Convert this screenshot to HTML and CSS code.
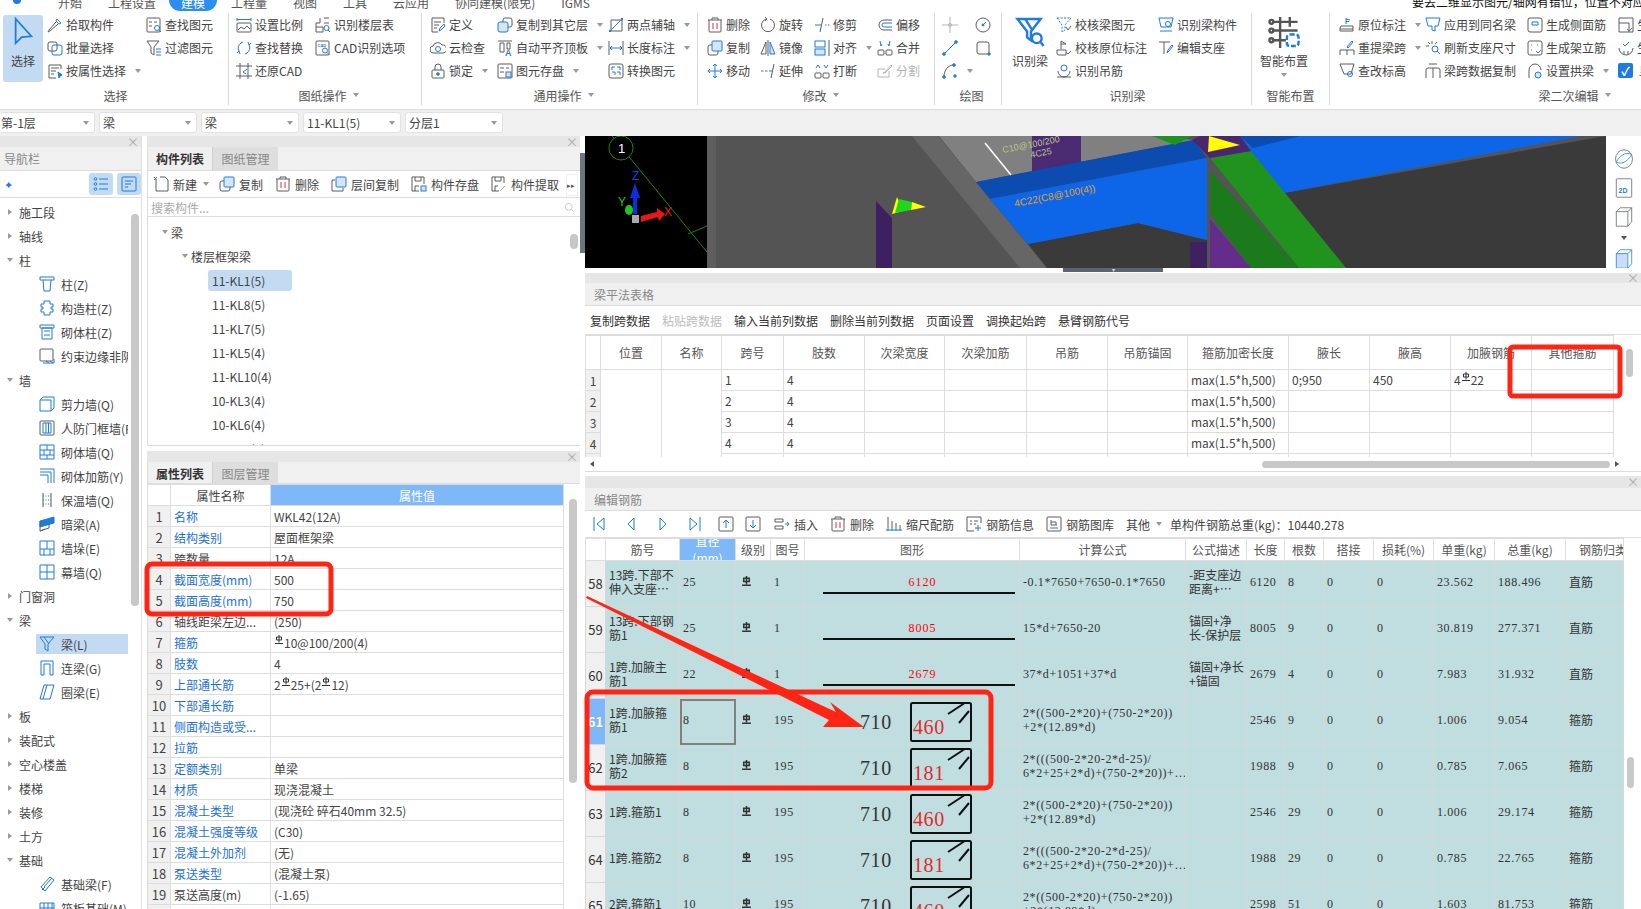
FILE: index.html
```html
<!DOCTYPE html>
<html lang="zh-CN">
<head>
    <meta charset="UTF-8">
    <title>建模</title>
    <link rel="stylesheet" href="styles.css">
</head>
<body>
    <svg class="sprite">
        <symbol id="i-pick" viewBox="0 0 16 16"><path class="b" d="M10 2l4 4-2 1-3-3z"/><path d="M9 5l-7 8-1 2 2-1 8-7"/></symbol>
        <symbol id="i-batch" viewBox="0 0 16 16"><rect x="1" y="2" width="9" height="9" rx="2"/><rect class="b" x="5" y="5" width="10" height="10" rx="2"/></symbol>
        <symbol id="i-attr" viewBox="0 0 16 16"><path d="M14 6V2H2v13h7M4 5h8M4 8h5M4 11h3"/><path class="bf" d="M11 9l4 3-2 1-1 2z"/></symbol>
        <symbol id="i-find" viewBox="0 0 16 16"><rect x="1" y="1" width="13" height="14" rx="1"/><path d="M3 5h3M8 5h3M3 9h3"/><circle class="b" cx="11" cy="11" r="2.500"/><path class="b" d="M13 13l2 2"/></symbol>
        <symbol id="i-filter" viewBox="0 0 16 16"><path d="M1 1h12L8 7v8L5 13V7z"/><path class="b" d="M10 9h5M10 12h5M10 15h5"/></symbol>
        <symbol id="i-scale" viewBox="0 0 16 16"><path class="b" d="M1 1v3M15 1v3M1 2.500h14"/><rect x="1" y="6" width="14" height="9" rx="1"/><path d="M2 13l3-3 3 2 3-3 3 3"/></symbol>
        <symbol id="i-floor" viewBox="0 0 16 16"><path d="M1 6h4V1M1 6v9h7v-5H1M9 1h5M9 6h5"/><circle class="b" cx="11.500" cy="11" r="2.500"/><path class="b" d="M13 13l2 2"/></symbol>
        <symbol id="i-swap" viewBox="0 0 16 16"><path class="b" d="M3 11a6 6 0 0 1 2-8l2-1M13 5a6 6 0 0 1-2 8l-2 1"/><path class="b" d="M4 14l-1-3-2 2M12 2l1 3 2-2"/></symbol>
        <symbol id="i-cad" viewBox="0 0 16 16"><rect x="1" y="1" width="13" height="14" rx="1"/><text class="ic-txt" x="2.500" y="6.500">CAD</text><circle class="b" cx="10" cy="10.500" r="2.500"/><path class="b" d="M12 12.500l2.500 2.500"/></symbol>
        <symbol id="i-crop" viewBox="0 0 16 16"><path d="M4 0v16M12 0v16M0 3h16M0 13h16"/><path class="b" d="M11 6L7 9l3 2"/></symbol>
        <symbol id="i-def" viewBox="0 0 16 16"><path d="M14 6V1H2v14h6M4 5h7M4 8h5M4 11h3"/><path class="b" d="M9 14l1-3 4-4 1 2-4 4z"/></symbol>
        <symbol id="i-cloud" viewBox="0 0 16 16"><path d="M4 13a3.500 3.500 0 0 1-1-7 5 5 0 0 1 9-1 4 4 0 0 1 1 8z"/><circle class="b" cx="8" cy="9" r="2.500"/></symbol>
        <symbol id="i-lock" viewBox="0 0 16 16"><path d="M5 7V4a3 3 0 0 1 6 0v3"/><rect x="2" y="7" width="12" height="8" rx="1"/><circle class="bf" cx="8" cy="11" r="1.300"/></symbol>
        <symbol id="i-copyf" viewBox="0 0 16 16"><rect x="6" y="1" width="9" height="9" rx="2"/><rect class="bl" x="1" y="5" width="10" height="10" rx="2"/></symbol>
        <symbol id="i-align" viewBox="0 0 16 16"><path d="M1 1h14M3 3h4v9H3zM10 3h3v6h-3z"/><text class="ic-blue" x="8" y="15.500">A</text></symbol>
        <symbol id="i-save" viewBox="0 0 16 16"><rect x="1" y="1" width="14" height="14" rx="1"/><path d="M3 5h4M9 5h3M3 9h4"/><rect class="bl" x="9" y="9" width="5" height="5"/></symbol>
        <symbol id="i-axis" viewBox="0 0 16 16"><path d="M3 3h11v11H3z"/><path class="b" d="M1 15L15 1M1 13l2 2M13 1l2 2"/></symbol>
        <symbol id="i-dim" viewBox="0 0 16 16"><path d="M1 1v14M15 1v14"/><path class="b" d="M2 8h12M4 6L2 8l2 2M12 6l2 2-2 2"/></symbol>
        <symbol id="i-conv" viewBox="0 0 16 16"><rect x="1" y="1" width="14" height="14" rx="2"/><path class="b" d="M4 7V4h3M9 4h3v3M4 9h3v3M9 9h3v3"/></symbol>
        <symbol id="i-del" viewBox="0 0 16 16"><path d="M1 3h14M5 3V1h6v2M2 3v11a1 1 0 0 0 1 1h10a1 1 0 0 0 1-1V3"/><path class="r" d="M6 6v6M10 6v6"/></symbol>
        <symbol id="i-rot" viewBox="0 0 16 16"><path d="M6 2a6.500 6.500 0 1 0 4 0"/><path class="b" d="M5 0l2 2-2 2"/></symbol>
        <symbol id="i-trim" viewBox="0 0 16 16"><path d="M6 15L9 1"/><path class="b" d="M1 8h6M11 8h1.500M14 8h1.500"/></symbol>
        <symbol id="i-offset" viewBox="0 0 16 16"><path d="M15 3H7a5 5 0 0 0 0 10h8"/><path class="b" d="M15 6H7a2 2 0 0 0 0 4h8"/></symbol>
        <symbol id="i-copy" viewBox="0 0 16 16"><rect x="1" y="5" width="10" height="10" rx="2"/><rect class="bl" x="5" y="1" width="10" height="10" rx="1"/></symbol>
        <symbol id="i-mirror" viewBox="0 0 16 16"><path d="M6 2L1 14h5z"/><path class="bl" d="M10 2l5 12h-5z"/><path d="M8 0v16"/></symbol>
        <symbol id="i-alignb" viewBox="0 0 16 16"><rect class="b" x="1" y="1" width="10" height="6"/><rect class="bl" x="1" y="9" width="10" height="6"/><path d="M15 0v16"/></symbol>
        <symbol id="i-merge" viewBox="0 0 16 16"><rect x="1" y="10" width="6" height="5" rx="1"/><rect x="9" y="10" width="6" height="5" rx="1"/><path class="b" d="M3 1l1 5 1-2M13 1l-1 5-1-2"/></symbol>
        <symbol id="i-move" viewBox="0 0 16 16"><path class="b" d="M8 1v14M1 8h14M6 3l2-2 2 2M6 13l2 2 2-2M3 6L1 8l2 2M13 6l2 2-2 2"/></symbol>
        <symbol id="i-ext" viewBox="0 0 16 16"><path d="M11 15L14 1"/><path class="b" d="M1 8h2.500M5 8h2.500M9 8h3"/></symbol>
        <symbol id="i-break" viewBox="0 0 16 16"><rect x="1" y="10" width="6" height="5" rx="1"/><rect x="9" y="10" width="6" height="5" rx="1"/><path class="b" d="M2 5l2-3 2 3M10 2l2 3 2-3"/></symbol>
        <symbol id="i-split" viewBox="0 0 16 16"><path class="g" d="M12 8v6H1V6h7M6 10l1 0 7-8 1 1-7 7z"/></symbol>
        <symbol id="i-point" viewBox="0 0 16 16"><path class="g" d="M8 0v16M0 8h16"/><circle class="g" cx="8" cy="8" r="1.500"/></symbol>
        <symbol id="i-circle" viewBox="0 0 16 16"><circle cx="8" cy="8" r="7"/><path class="b" d="M8 8l3-3"/><circle class="bf" cx="8" cy="8" r="1"/></symbol>
        <symbol id="i-line" viewBox="0 0 16 16"><path class="b" d="M2 14L14 2"/><circle class="bf" cx="2" cy="14" r="1.300"/><circle class="bf" cx="14" cy="2" r="1.300"/></symbol>
        <symbol id="i-rect" viewBox="0 0 16 16"><rect x="2" y="2" width="12" height="12" rx="2"/><circle class="bf" cx="14" cy="14" r="1.200"/></symbol>
        <symbol id="i-arc" viewBox="0 0 16 16"><path d="M2 14C2 7 6 2 12 2"/><circle class="bf" cx="2" cy="14" r="1.300"/><circle class="bf" cx="12" cy="2" r="1.300"/><circle class="bf" cx="13" cy="13" r="1.200"/></symbol>
        <symbol id="i-chk" viewBox="0 0 16 16"><path class="b" stroke-dasharray="2 1.500" d="M1 1h14l-6 7v5l-3 2V8z"/><path d="M10 10l2 3 3-4"/></symbol>
        <symbol id="i-chk2" viewBox="0 0 16 16"><path d="M5 9V1l5 3H5M1 10h9v5H3a2 2 0 0 1-2-2z"/><path class="b" d="M10 12l2 2 3-3"/></symbol>
        <symbol id="i-hang" viewBox="0 0 16 16"><path d="M2 8a6 6 0 0 0 12 0M1 14h14"/><circle class="b" cx="8" cy="5" r="3"/></symbol>
        <symbol id="i-beamc" viewBox="0 0 16 16"><path class="b" d="M1 1h14l-2 9H3zM2 14h12"/><circle class="b" cx="10" cy="7" r="2.500"/></symbol>
        <symbol id="i-sup" viewBox="0 0 16 16"><path d="M1 2h11M6 2v12"/><path class="b" d="M9 13l1-3 4-5 1 1-4 5z"/></symbol>
        <symbol id="i-pos" viewBox="0 0 16 16"><path class="b" d="M7 1v6M7 2l4 1M7 4.500h3"/><path d="M2 9h12v5H1v-3zM1 12h13"/></symbol>
        <symbol id="i-span" viewBox="0 0 16 16"><path class="b" d="M8 7l5-6 1 1-5 6z"/><path d="M1 15v-5h14v5M8 10v5"/></symbol>
        <symbol id="i-elev" viewBox="0 0 16 16"><path d="M1 1h14l-3 10H5z"/><circle class="b" cx="11" cy="11" r="2.500"/></symbol>
        <symbol id="i-same" viewBox="0 0 16 16"><path class="b" d="M1 1h14l-2 8h-3v5l-3-1V9H3z"/></symbol>
        <symbol id="i-refresh" viewBox="0 0 16 16"><path d="M7 1v3M1 6h3M3 2l2 2M12 2l-2 2"/><circle class="b" cx="10" cy="9" r="3"/><path class="b" d="M12 11l3 3"/></symbol>
        <symbol id="i-spancopy" viewBox="0 0 16 16"><path d="M1 15V7a2 2 0 0 1 2-2h10a2 2 0 0 1 2 2v8M8 5v10M4 1h8"/></symbol>
        <symbol id="i-side" viewBox="0 0 16 16"><rect x="1" y="1" width="14" height="14" rx="2"/><path class="b" d="M5 5h6M5 8h6M5 5v3M11 5v3"/></symbol>
        <symbol id="i-erect" viewBox="0 0 16 16"><rect x="1" y="1" width="14" height="14" rx="2"/><path class="b" d="M4 5h1M10 5h1M4 10h1M9 11l2 2 3-3"/></symbol>
        <symbol id="i-arch" viewBox="0 0 16 16"><path d="M2 15V7a6 6 0 0 1 12 0"/><circle class="bl" cx="11" cy="12" r="3"/></symbol>
        <symbol id="i-gen" viewBox="0 0 16 16"><path d="M1 1h14v14H1zM1 6h10v9"/><path class="b" d="M9 12l2 2 3-3"/></symbol>
        <symbol id="i-gen2" viewBox="0 0 16 16"><path d="M1 8a7 7 0 0 0 14 0M6 14v-3M10 14v-3"/><path class="b" d="M5 4l2 2 4-4"/></symbol>
        <symbol id="i-list" viewBox="0 0 16 16"><path class="b" d="M6 3h9M6 8h9M6 13h9"/><circle class="b" cx="2.500" cy="3" r="1.300"/><circle class="b" cx="2.500" cy="8" r="1.300"/><circle class="b" cx="2.500" cy="13" r="1.300"/></symbol>
        <symbol id="i-form" viewBox="0 0 16 16"><rect class="b" x="1" y="1" width="14" height="14" rx="1"/><path class="b" d="M4 5h8M4 8h6M4 11h3"/></symbol>
        <symbol id="i-col" viewBox="0 0 16 16"><path class="b" d="M1 1h14v3H1zM4 4l1 11h6l1-11"/></symbol>
        <symbol id="i-col2" viewBox="0 0 16 16"><path class="b" d="M5 1h6v3h3v3h-2v2h2v3h-3v3H5v-3H2V9h2V7H2V4h3z"/></symbol>
        <symbol id="i-col3" viewBox="0 0 16 16"><path class="b" d="M1 1h14v3H1zM3 4h10v11H3zM5 7h6M5 11h6"/></symbol>
        <symbol id="i-edge" viewBox="0 0 16 16"><rect x="1" y="1" width="13" height="12" rx="1"/><path class="b" d="M4 15h11v-4M7 13l3 2M11 13l3 2"/></symbol>
        <symbol id="i-wall" viewBox="0 0 16 16"><path class="b" d="M1 4h11v11H1zM1 4l3-3h11v11l-3 3"/></symbol>
        <symbol id="i-door" viewBox="0 0 16 16"><rect x="1" y="1" width="14" height="14" rx="1"/><path class="b" d="M4 3h8v10H4zM7 3v10M9.500 3v10"/></symbol>
        <symbol id="i-brick" viewBox="0 0 16 16"><path class="b" d="M1 1h14v14H1zM1 6h14M1 11h14M8 1v5M5 6v5M11 6v5M8 11v4"/></symbol>
        <symbol id="i-rebar" viewBox="0 0 16 16"><path class="b" d="M1 1h14v14M1 4h11v11M1 7h8v8"/></symbol>
        <symbol id="i-ins" viewBox="0 0 16 16"><path d="M4 1v14M12 1v14"/><path class="b" d="M4 4h8M4 8h8M4 12h8" stroke-dasharray="1 1.500"/></symbol>
        <symbol id="i-dark" viewBox="0 0 16 16"><path class="bf" d="M1 5l14-4v6L1 11z"/><path d="M1 5v10l9-3V8M1 15l5-2"/></symbol>
        <symbol id="i-pier" viewBox="0 0 16 16"><path class="b" d="M1 1h14v14H1zM8 1v8M1 9h14M5 9v6M11 9v6"/></symbol>
        <symbol id="i-cur" viewBox="0 0 16 16"><path class="b" d="M1 1h14v14H1zM8 1v14M1 8h14"/></symbol>
        <symbol id="i-beam" viewBox="0 0 16 16"><path class="b" d="M1 1h14l-6 7v7l-3-2V8zM5 1l5 7"/></symbol>
        <symbol id="i-lian" viewBox="0 0 16 16"><path class="b" d="M2 15V1h12v14h-3V4H5v11z"/></symbol>
        <symbol id="i-ring" viewBox="0 0 16 16"><path class="b" d="M5 1h10l-4 14H1zM8 1L4 15"/></symbol>
        <symbol id="i-found" viewBox="0 0 16 16"><path class="b" d="M2 11L11 1l4 3-9 11zM5 11l8-9M3 14l3-3"/></symbol>
        <symbol id="i-raft" viewBox="0 0 16 16"><path class="b" d="M1 3h14v12H1zM5 3v12M9 3v12M13 3v12M1 8h14"/></symbol>
        <symbol id="i-new" viewBox="0 0 16 16"><path d="M3 3v12h12V4l-3-3H7"/><path class="b" d="M1 1l3 3M4 1L1 4"/></symbol>
        <symbol id="i-lcopy" viewBox="0 0 16 16"><path d="M4 4H1v11h11v-3"/><rect class="bl" x="5" y="1" width="10" height="10" rx="1"/></symbol>
        <symbol id="i-fsave" viewBox="0 0 16 16"><path d="M8 15H1V1h12v7M4 1v4h6V1M4 15v-5h4"/><rect class="bl" x="10" y="10" width="5" height="5"/></symbol>
        <symbol id="i-fget" viewBox="0 0 16 16"><path d="M8 15H1V1h12v6M4 1v4h6V1M4 15v-5h3"/><path class="g" d="M9 15l5-5"/></symbol>
        <symbol id="i-mag" viewBox="0 0 16 16"><circle class="g" cx="7" cy="7" r="5"/><path class="g" d="M11 11l4 4"/></symbol>
        <symbol id="i-first" viewBox="0 0 16 16"><path class="b" d="M3 1v14M13 2L6 8l7 6z"/></symbol>
        <symbol id="i-prev" viewBox="0 0 16 16"><path class="b" d="M11 2L5 8l6 6z"/></symbol>
        <symbol id="i-next" viewBox="0 0 16 16"><path class="b" d="M5 2l6 6-6 6z"/></symbol>
        <symbol id="i-last" viewBox="0 0 16 16"><path class="b" d="M13 1v14M3 2l7 6-7 6z"/></symbol>
        <symbol id="i-up" viewBox="0 0 16 16"><rect x="1" y="1" width="14" height="14" rx="1"/><path class="b" d="M8 12V4M5 7l3-3 3 3"/></symbol>
        <symbol id="i-down" viewBox="0 0 16 16"><rect x="1" y="1" width="14" height="14" rx="1"/><path class="b" d="M8 4v8M5 9l3 3 3-3"/></symbol>
        <symbol id="i-insert" viewBox="0 0 16 16"><path d="M1 3h8v3H1zM1 10h8v3H1z"/><path class="b" d="M11 8h4M13 6l2 2-2 2"/></symbol>
        <symbol id="i-ruler" viewBox="0 0 16 16"><path d="M2 1v11M6 5v7M10 7v5M14 9v3"/><path class="b" d="M0 14h16M2 12v3M6 12v3M10 12v3M14 12v3"/></symbol>
        <symbol id="i-info" viewBox="0 0 16 16"><path d="M15 7V1H1v14h7M4 5h2M8 5h4M4 8h2M8 8h2"/><path class="b" d="M9 12h6M12 9v6"/></symbol>
        <symbol id="i-lib" viewBox="0 0 16 16"><rect x="1" y="1" width="14" height="14" rx="1"/><path d="M5 4v5h6M5 6h5v3"/><path class="b" d="M4 12h8"/></symbol>
        <symbol id="i-rb" viewBox="0 0 8 10"><path d="M1.500 2h5v3h-5zM4 0v7.500M0 8.500h8"/></symbol>
        <symbol id="i-stirrup" viewBox="0 0 62 40"><rect class="st-box" x="1" y="1" width="60" height="38" rx="1.500"/><path class="st-box" d="M38 12L54 1.500M49 21l10-12"/></symbol>
    </svg>

    <div class="tab-strip">
        <span class="logo-dot"></span>
        <span class="tab">开始</span>
        <span class="tab">工程设置</span>
        <span class="tab active">建模</span>
        <span class="tab">工程量</span>
        <span class="tab">视图</span>
        <span class="tab">工具</span>
        <span class="tab">云应用</span>
        <span class="tab">协同建模(限免)</span>
        <span class="tab">IGMS</span>
        <span class="top-note">要丢二维显示图元/轴网有错位，位置不对应</span>
    </div>

    <div class="ribbon">
        <div class="rb-group g-select">
            <div class="rb-body">
                <div class="rb-big selected">
                    <svg class="ic big-arrow" viewBox="0 0 24 32"><path d="M3 2v28l7-7 11-1z"/></svg>
                    <span>选择</span>
                </div>
                <div class="rb-col w99">
                    <div class="rb-item"><svg class="ic"><use href="#i-pick"/></svg><span>拾取构件</span></div>
                    <div class="rb-item"><svg class="ic"><use href="#i-batch"/></svg><span>批量选择</span></div>
                    <div class="rb-item"><svg class="ic"><use href="#i-attr"/></svg><span>按属性选择</span><i class="caret"></i></div>
                </div>
                <div class="rb-col">
                    <div class="rb-item"><svg class="ic"><use href="#i-find"/></svg><span>查找图元</span></div>
                    <div class="rb-item"><svg class="ic"><use href="#i-filter"/></svg><span>过滤图元</span></div>
                </div>
            </div>
            <div class="rb-label">选择</div>
        </div>

        <div class="rb-group g-cad">
            <div class="rb-body">
                <div class="rb-col w79">
                    <div class="rb-item"><svg class="ic"><use href="#i-scale"/></svg><span>设置比例</span></div>
                    <div class="rb-item"><svg class="ic"><use href="#i-swap"/></svg><span>查找替换</span></div>
                    <div class="rb-item"><svg class="ic"><use href="#i-crop"/></svg><span>还原CAD</span></div>
                </div>
                <div class="rb-col">
                    <div class="rb-item"><svg class="ic"><use href="#i-floor"/></svg><span>识别楼层表</span></div>
                    <div class="rb-item"><svg class="ic"><use href="#i-cad"/></svg><span>CAD识别选项</span></div>
                </div>
            </div>
            <div class="rb-label">图纸操作<i class="caret"></i></div>
        </div>

        <div class="rb-group g-common">
            <div class="rb-body">
                <div class="rb-col w67">
                    <div class="rb-item"><svg class="ic"><use href="#i-def"/></svg><span>定义</span></div>
                    <div class="rb-item"><svg class="ic"><use href="#i-cloud"/></svg><span>云检查</span></div>
                    <div class="rb-item"><svg class="ic"><use href="#i-lock"/></svg><span>锁定</span><i class="caret"></i></div>
                </div>
                <div class="rb-col w111">
                    <div class="rb-item"><svg class="ic"><use href="#i-copyf"/></svg><span>复制到其它层</span><i class="caret"></i></div>
                    <div class="rb-item"><svg class="ic"><use href="#i-align"/></svg><span>自动平齐顶板</span><i class="caret"></i></div>
                    <div class="rb-item"><svg class="ic"><use href="#i-save"/></svg><span>图元存盘</span><i class="caret"></i></div>
                </div>
                <div class="rb-col">
                    <div class="rb-item"><svg class="ic"><use href="#i-axis"/></svg><span>两点辅轴</span><i class="caret"></i></div>
                    <div class="rb-item"><svg class="ic"><use href="#i-dim"/></svg><span>长度标注</span><i class="caret"></i></div>
                    <div class="rb-item"><svg class="ic"><use href="#i-conv"/></svg><span>转换图元</span></div>
                </div>
            </div>
            <div class="rb-label">通用操作<i class="caret"></i></div>
        </div>

        <div class="rb-group g-edit">
            <div class="rb-body">
                <div class="rb-col w53">
                    <div class="rb-item"><svg class="ic"><use href="#i-del"/></svg><span>删除</span></div>
                    <div class="rb-item"><svg class="ic"><use href="#i-copy"/></svg><span>复制</span></div>
                    <div class="rb-item"><svg class="ic"><use href="#i-move"/></svg><span>移动</span></div>
                </div>
                <div class="rb-col w54">
                    <div class="rb-item"><svg class="ic"><use href="#i-rot"/></svg><span>旋转</span></div>
                    <div class="rb-item"><svg class="ic"><use href="#i-mirror"/></svg><span>镜像</span></div>
                    <div class="rb-item"><svg class="ic"><use href="#i-ext"/></svg><span>延伸</span></div>
                </div>
                <div class="rb-col w63">
                    <div class="rb-item"><svg class="ic"><use href="#i-trim"/></svg><span>修剪</span></div>
                    <div class="rb-item"><svg class="ic"><use href="#i-alignb"/></svg><span>对齐</span><i class="caret"></i></div>
                    <div class="rb-item"><svg class="ic"><use href="#i-break"/></svg><span>打断</span></div>
                </div>
                <div class="rb-col">
                    <div class="rb-item"><svg class="ic"><use href="#i-offset"/></svg><span>偏移</span></div>
                    <div class="rb-item"><svg class="ic"><use href="#i-merge"/></svg><span>合并</span></div>
                    <div class="rb-item disabled"><svg class="ic"><use href="#i-split"/></svg><span>分割</span></div>
                </div>
            </div>
            <div class="rb-label">修改<i class="caret"></i></div>
        </div>

        <div class="rb-group g-draw">
            <div class="rb-body">
                <div class="rb-col w33">
                    <div class="rb-item"><svg class="ic"><use href="#i-point"/></svg></div>
                    <div class="rb-item"><svg class="ic"><use href="#i-line"/></svg></div>
                    <div class="rb-item"><svg class="ic"><use href="#i-arc"/></svg><i class="caret"></i></div>
                </div>
                <div class="rb-col">
                    <div class="rb-item"><svg class="ic"><use href="#i-circle"/></svg></div>
                    <div class="rb-item"><svg class="ic"><use href="#i-rect"/></svg></div>
                </div>
            </div>
            <div class="rb-label">绘图</div>
        </div>

        <div class="rb-group g-beam">
            <div class="rb-body">
                <div class="rb-big w52">
                    <svg class="big-filter" viewBox="0 0 30 32"><path d="M2 2h24L16 15v9l-4-3v-6zM10 2l7 11"/><circle cx="22" cy="22" r="5"/><path d="M26 26l3 4"/></svg>
                    <span>识别梁</span>
                </div>
                <div class="rb-col w102">
                    <div class="rb-item"><svg class="ic"><use href="#i-chk"/></svg><span>校核梁图元</span></div>
                    <div class="rb-item"><svg class="ic"><use href="#i-chk2"/></svg><span>校核原位标注</span></div>
                    <div class="rb-item"><svg class="ic"><use href="#i-hang"/></svg><span>识别吊筋</span></div>
                </div>
                <div class="rb-col">
                    <div class="rb-item"><svg class="ic"><use href="#i-beamc"/></svg><span>识别梁构件</span></div>
                    <div class="rb-item"><svg class="ic"><use href="#i-sup"/></svg><span>编辑支座</span></div>
                </div>
            </div>
            <div class="rb-label">识别梁</div>
        </div>

        <div class="rb-group g-smart">
            <div class="rb-body">
                <div class="rb-big w62">
                    <svg class="big-smart" viewBox="0 0 32 32"><path d="M4 5h26M4 14h26M4 24h14M12 0v32M22 0v10"/><circle cx="3" cy="5" r="2"/><circle cx="3" cy="14" r="2"/><circle cx="3" cy="24" r="2"/><rect class="smart-sel" x="19" y="18" width="12" height="12" rx="3"/></svg>
                    <span>智能布置</span>
                    <i class="caret"></i>
                </div>
            </div>
            <div class="rb-label">智能布置</div>
        </div>

        <div class="rb-group g-second">
            <div class="rb-body">
                <div class="rb-col w86">
                    <div class="rb-item"><svg class="ic"><use href="#i-pos"/></svg><span>原位标注</span><i class="caret"></i></div>
                    <div class="rb-item"><svg class="ic"><use href="#i-span"/></svg><span>重提梁跨</span><i class="caret"></i></div>
                    <div class="rb-item"><svg class="ic"><use href="#i-elev"/></svg><span>查改标高</span></div>
                </div>
                <div class="rb-col w102">
                    <div class="rb-item"><svg class="ic"><use href="#i-same"/></svg><span>应用到同名梁</span></div>
                    <div class="rb-item"><svg class="ic"><use href="#i-refresh"/></svg><span>刷新支座尺寸</span></div>
                    <div class="rb-item"><svg class="ic"><use href="#i-spancopy"/></svg><span>梁跨数据复制</span></div>
                </div>
                <div class="rb-col w91">
                    <div class="rb-item"><svg class="ic"><use href="#i-side"/></svg><span>生成侧面筋</span></div>
                    <div class="rb-item"><svg class="ic"><use href="#i-erect"/></svg><span>生成架立筋</span></div>
                    <div class="rb-item"><svg class="ic"><use href="#i-arch"/></svg><span>设置拱梁</span><i class="caret"></i></div>
                </div>
                <div class="rb-col">
                    <div class="rb-item"><svg class="ic"><use href="#i-gen"/></svg><span>生成吊筋</span></div>
                    <div class="rb-item"><svg class="ic"><use href="#i-gen2"/></svg><span>生成</span></div>
                    <div class="rb-item"><span class="check">✓</span><span>显示</span></div>
                </div>
            </div>
            <div class="rb-label">梁二次编辑<i class="caret"></i></div>
        </div>
    </div>

    <div class="combo-row">
        <div class="combo first">第-1层<i class="caret"></i></div>
        <div class="combo">梁<i class="caret"></i></div>
        <div class="combo">梁<i class="caret"></i></div>
        <div class="combo">11-KL1(5)<i class="caret"></i></div>
        <div class="combo">分层1<i class="caret"></i></div>
    </div>

    <div class="main-content">
        <div class="nav-panel">
            <div class="close-bar">×</div>
            <div class="panel-head">导航栏</div>
            <div class="nav-tools">
                <span class="sparkle">✦</span>
                <span class="nav-btn"><svg class="ic"><use href="#i-list"/></svg></span>
                <span class="nav-btn"><svg class="ic"><use href="#i-form"/></svg></span>
            </div>
            <div class="nav-tree">
                <div class="node"><i class="tri-r"></i>施工段</div>
                <div class="node"><i class="tri-r"></i>轴线</div>
                <div class="node"><i class="tri-d"></i>柱</div>
                <div class="leaf"><svg class="ic"><use href="#i-col"/></svg><span>柱(Z)</span></div>
                <div class="leaf"><svg class="ic"><use href="#i-col2"/></svg><span>构造柱(Z)</span></div>
                <div class="leaf"><svg class="ic"><use href="#i-col3"/></svg><span>砌体柱(Z)</span></div>
                <div class="leaf"><svg class="ic"><use href="#i-edge"/></svg><span>约束边缘非阴影</span></div>
                <div class="node"><i class="tri-d"></i>墙</div>
                <div class="leaf"><svg class="ic"><use href="#i-wall"/></svg><span>剪力墙(Q)</span></div>
                <div class="leaf"><svg class="ic"><use href="#i-door"/></svg><span>人防门框墙(RF)</span></div>
                <div class="leaf"><svg class="ic"><use href="#i-brick"/></svg><span>砌体墙(Q)</span></div>
                <div class="leaf"><svg class="ic"><use href="#i-rebar"/></svg><span>砌体加筋(Y)</span></div>
                <div class="leaf"><svg class="ic"><use href="#i-ins"/></svg><span>保温墙(Q)</span></div>
                <div class="leaf"><svg class="ic"><use href="#i-dark"/></svg><span>暗梁(A)</span></div>
                <div class="leaf"><svg class="ic"><use href="#i-pier"/></svg><span>墙垛(E)</span></div>
                <div class="leaf"><svg class="ic"><use href="#i-cur"/></svg><span>幕墙(Q)</span></div>
                <div class="node"><i class="tri-r"></i>门窗洞</div>
                <div class="node"><i class="tri-d"></i>梁</div>
                <div class="leaf selected"><svg class="ic"><use href="#i-beam"/></svg><span>梁(L)</span></div>
                <div class="leaf"><svg class="ic"><use href="#i-lian"/></svg><span>连梁(G)</span></div>
                <div class="leaf"><svg class="ic"><use href="#i-ring"/></svg><span>圈梁(E)</span></div>
                <div class="node"><i class="tri-r"></i>板</div>
                <div class="node"><i class="tri-r"></i>装配式</div>
                <div class="node"><i class="tri-r"></i>空心楼盖</div>
                <div class="node"><i class="tri-r"></i>楼梯</div>
                <div class="node"><i class="tri-r"></i>装修</div>
                <div class="node"><i class="tri-r"></i>土方</div>
                <div class="node"><i class="tri-d"></i>基础</div>
                <div class="leaf"><svg class="ic"><use href="#i-found"/></svg><span>基础梁(F)</span></div>
                <div class="leaf"><svg class="ic"><use href="#i-raft"/></svg><span>筏板基础(M)</span></div>
            </div>
            <div class="thumb nav-thumb"></div>
        </div>

        <div class="mid-col">
            <div class="list-panel">
                <div class="close-bar">×</div>
                <div class="tab-head">
                    <span class="panel-tab on">构件列表</span>
                    <span class="panel-tab">图纸管理</span>
                </div>
                <div class="list-tools">
                    <div class="tool"><svg class="ic"><use href="#i-new"/></svg><span>新建</span><i class="caret"></i></div>
                    <div class="tool"><svg class="ic"><use href="#i-copy"/></svg><span>复制</span></div>
                    <div class="tool"><svg class="ic"><use href="#i-del"/></svg><span>删除</span></div>
                    <div class="tool"><svg class="ic"><use href="#i-lcopy"/></svg><span>层间复制</span></div>
                    <div class="tool"><svg class="ic"><use href="#i-fsave"/></svg><span>构件存盘</span></div>
                    <div class="tool"><svg class="ic"><use href="#i-fget"/></svg><span>构件提取</span></div>
                    <span class="more">▸▸</span>
                </div>
                <div class="search-row">
                    <span>搜索构件...</span>
                    <svg class="ic small"><use href="#i-mag"/></svg>
                </div>
                <div class="list-tree">
                    <div class="lv1"><i class="tri-d"></i>梁</div>
                    <div class="lv2"><i class="tri-d"></i>楼层框架梁</div>
                    <div class="lv3"><span class="pick">11-KL1(5)</span></div>
                    <div class="lv3"><span>11-KL8(5)</span></div>
                    <div class="lv3"><span>11-KL7(5)</span></div>
                    <div class="lv3"><span>11-KL5(4)</span></div>
                    <div class="lv3"><span>11-KL10(4)</span></div>
                    <div class="lv3"><span>10-KL3(4)</span></div>
                    <div class="lv3"><span>10-KL6(4)</span></div>
                    <div class="lv3"><span>10-KL4(4)</span></div>
                </div>
                <div class="thumb list-thumb"></div>
            </div>

            <div class="prop-panel">
                <div class="close-bar">×</div>
                <div class="tab-head">
                    <span class="panel-tab on">属性列表</span>
                    <span class="panel-tab">图层管理</span>
                </div>
                <table class="prop-table">
                    <colgroup><col class="c23"><col class="c100"><col></colgroup>
                    <tr><th></th><th>属性名称</th><th class="hl">属性值</th></tr>
                    <tr><td class="idx">1</td><td class="lnk">名称</td><td>WKL42(12A)</td></tr>
                    <tr><td class="idx">2</td><td class="lnk">结构类别</td><td>屋面框架梁</td></tr>
                    <tr><td class="idx">3</td><td>跨数量</td><td>12A</td></tr>
                    <tr><td class="idx">4</td><td class="lnk">截面宽度(mm)</td><td>500</td></tr>
                    <tr><td class="idx">5</td><td class="lnk">截面高度(mm)</td><td>750</td></tr>
                    <tr><td class="idx">6</td><td>轴线距梁左边...</td><td>(250)</td></tr>
                    <tr><td class="idx">7</td><td class="lnk">箍筋</td><td><svg class="rb"><use href="#i-rb"/></svg>10@100/200(4)</td></tr>
                    <tr><td class="idx">8</td><td class="lnk">肢数</td><td>4</td></tr>
                    <tr><td class="idx">9</td><td class="lnk">上部通长筋</td><td>2<svg class="rb"><use href="#i-rb"/></svg>25+(2<svg class="rb"><use href="#i-rb"/></svg>12)</td></tr>
                    <tr><td class="idx">10</td><td class="lnk">下部通长筋</td><td></td></tr>
                    <tr><td class="idx">11</td><td class="lnk">侧面构造或受...</td><td></td></tr>
                    <tr><td class="idx">12</td><td class="lnk">拉筋</td><td></td></tr>
                    <tr><td class="idx">13</td><td class="lnk">定额类别</td><td>单梁</td></tr>
                    <tr><td class="idx">14</td><td class="lnk">材质</td><td>现浇混凝土</td></tr>
                    <tr><td class="idx">15</td><td class="lnk">混凝土类型</td><td>(现浇砼 碎石40mm 32.5)</td></tr>
                    <tr><td class="idx">16</td><td class="lnk">混凝土强度等级</td><td>(C30)</td></tr>
                    <tr><td class="idx">17</td><td class="lnk">混凝土外加剂</td><td>(无)</td></tr>
                    <tr><td class="idx">18</td><td class="lnk">泵送类型</td><td>(混凝土泵)</td></tr>
                    <tr><td class="idx">19</td><td>泵送高度(m)</td><td>(-1.65)</td></tr>
                    <tr><td class="idx"></td><td></td><td></td></tr>
                </table>
                <div class="thumb prop-thumb"></div>
            </div>
        </div>

        <div class="right-col">
            <div class="view-wrap">
                <span class="side-handle"></span>
                <svg class="view-3d" viewBox="0 0 1021 132" preserveAspectRatio="none">
                    <rect width="1021" height="132" fill="#545454"/>
                    <rect width="122" height="132" fill="#000"/>
                    <rect x="122" width="9" height="132" fill="#5e5e5e"/>
                    <polygon points="354,0 567,0 610,4 391,46" fill="#808080"/>
                    <polygon points="327,0 353,0 462,132 435,132" fill="#666"/>
                    <rect x="447" width="49" height="36" fill="#4a2a72"/>
                    <polygon points="462,132 443,108 553,87 622,104 622,132" fill="#3a3a3a"/>
                    <polygon points="699,57 1021,0 1021,132 761,132" fill="#3a3a3a"/>
                    <polygon points="391,46 608,4 622,22 405,63" fill="#0c4cb0"/>
                    <polygon points="405,63 622,22 622,104 553,87 443,108" fill="#0d66e8"/>
                    <polygon points="655,0 996,0 699,57 666,15" fill="#0d66e8"/>
                    <polygon points="655,0 715,0 668,12" fill="#0c4cb0"/>
                    <polygon points="567,0 607,0 590,9" fill="#20931f"/>
                    <polygon points="625,22 666,15 761,132 714,132" fill="#20931f"/>
                    <polygon points="625,35 714,132 666,132 625,77" fill="#1a7a1c"/>
                    <polygon points="625,83 666,132 625,132" fill="#642d8c"/>
                    <rect x="605" y="106" width="17" height="26" fill="#3f2060"/>
                    <polygon points="607,4 615,0 655,0 666,15 625,22" fill="#4c2570"/>
                    <polygon points="624,0 655,9 623,16" fill="#ff0"/>
                    <polygon points="291,65 307,82 307,132 291,132" fill="#3c2060"/>
                    <polygon points="312,61 307,78 318,75" fill="#ff0"/>
                    <polygon points="314,63 327,66 326,74 310,77" fill="#1dd81d"/>
                    <polygon points="327,66 341,71 326,74" fill="#ff0"/>
                    <line x1="400" y1="7" x2="426" y2="39" stroke="#fff" stroke-width="1.500"/>
                    <text class="beam-text" transform="translate(430 71) rotate(-11)">4C22(C8@100(4))</text>
                    <text class="beam-text pale" transform="translate(446 22) rotate(-11)">4C25</text>
                    <text class="beam-text pale" transform="translate(418 17) rotate(-11)">C10@100/200</text>
                    <line x1="27" y1="0" x2="122" y2="116" stroke="#0f8a0f"/>
                    <line x1="103" y1="98" x2="122" y2="90" stroke="#0f8a0f"/>
                    <circle cx="36" cy="12" r="12" fill="#000" stroke="#0f8a0f"/>
                    <text class="axis-num" x="33" y="17">1</text>
                    <polygon points="50,47 55,62 52,62 52,78 48,78 48,62 45,62" fill="#0b2fe0"/>
                    <ellipse cx="44" cy="74" rx="4" ry="5" fill="#1dc81d"/>
                    <polygon points="56,80 72,76 72,72 80,78 74,85 73,81 56,86" fill="#e81818"/>
                    <rect x="47" y="79" width="7" height="8" fill="#aaa"/>
                    <text class="axis-z" x="47" y="44">Z</text>
                    <text class="axis-y" x="33" y="70">Y</text>
                    <text class="axis-x" x="79" y="80">X</text>
                </svg>
                <div class="view-side">
                    <svg class="view-ic" viewBox="0 0 24 26"><ellipse cx="12" cy="13" rx="11" ry="12"/><path class="b" d="M2 17C6 9 14 3 22 7 18 15 10 21 2 17z"/></svg>
                    <svg class="view-ic" viewBox="0 0 24 26"><rect x="2" y="1" width="20" height="24" rx="1"/><text class="ic-2d" x="5" y="19">2D</text></svg>
                    <svg class="view-ic" viewBox="0 0 24 26"><path d="M2 6v19h15V6zM2 6l5-5h15v18l-5 6M17 6l5-5"/></svg>
                    <i class="caret dark"></i>
                    <svg class="view-ic" viewBox="0 0 24 26"><path class="cube-on" d="M2 6v19h15V6z"/><path class="b" d="M2 6l5-5h15v18l-5 6M17 6l5-5"/></svg>
                </div>
            </div>
            <div class="split-bar"><span class="split-tab">▾</span></div>

            <div class="span-panel">
                <div class="close-bar thin">×</div>
                <div class="panel-head">梁平法表格</div>
                <div class="span-tools">
                    <span>复制跨数据</span>
                    <span class="off">粘贴跨数据</span>
                    <span>输入当前列数据</span>
                    <span>删除当前列数据</span>
                    <span>页面设置</span>
                    <span>调换起始跨</span>
                    <span>悬臂钢筋代号</span>
                </div>
                <div class="span-wrap">
                    <table class="span-table">
                        <colgroup><col class="s15"><col class="s61"><col class="s60"><col class="s62"><col class="s81"><col class="s80"><col class="s82"><col class="s81"><col class="s80"><col class="s101"><col class="s81"><col class="s81"><col class="s81"><col class="s82"></colgroup>
                        <tr><th></th><th>位置</th><th>名称</th><th>跨号</th><th>肢数</th><th>次梁宽度</th><th>次梁加筋</th><th>吊筋</th><th>吊筋锚固</th><th>箍筋加密长度</th><th>腋长</th><th>腋高</th><th>加腋钢筋</th><th>其他箍筋</th></tr>
                        <tr><td class="idx">1</td><td rowspan="5"></td><td rowspan="5"></td><td>1</td><td>4</td><td></td><td></td><td></td><td></td><td>max(1.5*h,500)</td><td>0;950</td><td>450</td><td>4<svg class="rb"><use href="#i-rb"/></svg>22</td><td></td></tr>
                        <tr><td class="idx">2</td><td>2</td><td>4</td><td></td><td></td><td></td><td></td><td>max(1.5*h,500)</td><td></td><td></td><td></td><td></td></tr>
                        <tr><td class="idx">3</td><td>3</td><td>4</td><td></td><td></td><td></td><td></td><td>max(1.5*h,500)</td><td></td><td></td><td></td><td></td></tr>
                        <tr><td class="idx">4</td><td>4</td><td>4</td><td></td><td></td><td></td><td></td><td>max(1.5*h,500)</td><td></td><td></td><td></td><td></td></tr>
                        <tr><td class="idx"></td><td></td><td></td><td></td><td></td><td></td><td></td><td></td><td></td><td></td><td></td><td></td></tr>
                    </table>
                </div>
                <div class="hscroll"><i class="tri-l"></i><span class="hthumb"></span><i class="tri-rr"></i></div>
                <div class="thumb span-thumb"></div>
            </div>

            <div class="bar-panel">
                <div class="close-bar">×</div>
                <div class="panel-head">编辑钢筋</div>
                <div class="bar-tools">
                    <svg class="ic nav-ic"><use href="#i-first"/></svg>
                    <svg class="ic nav-ic"><use href="#i-prev"/></svg>
                    <svg class="ic nav-ic"><use href="#i-next"/></svg>
                    <svg class="ic last-ic"><use href="#i-last"/></svg>
                    <svg class="ic up-ic"><use href="#i-up"/></svg>
                    <svg class="ic down-ic"><use href="#i-down"/></svg>
                    <div class="tool"><svg class="ic"><use href="#i-insert"/></svg><span>插入</span></div>
                    <div class="tool"><svg class="ic"><use href="#i-del"/></svg><span>删除</span></div>
                    <div class="tool"><svg class="ic"><use href="#i-ruler"/></svg><span>缩尺配筋</span></div>
                    <div class="tool"><svg class="ic"><use href="#i-info"/></svg><span>钢筋信息</span></div>
                    <div class="tool"><svg class="ic"><use href="#i-lib"/></svg><span>钢筋图库</span></div>
                    <div class="tool"><span>其他</span><i class="caret"></i></div>
                    <span class="total">单构件钢筋总重(kg)：10440.278</span>
                </div>
                <table class="bar-table">
                    <colgroup><col class="b20"><col class="b74"><col class="b56"><col class="b35"><col class="b34"><col class="b215"><col class="b166"><col class="b61"><col class="b38"><col class="b39"><col class="b50"><col class="b60"><col class="b61"><col class="b71"><col class="b58"></colgroup>
                    <tr>
                        <th></th><th>筋号</th><th class="hl clip"><div><span>直径<br>(mm)</span></div></th><th>级别</th><th>图号</th><th>图形</th><th>计算公式</th><th>公式描述</th><th>长度</th><th>根数</th><th>搭接</th><th>损耗(%)</th><th>单重(kg)</th><th>总重(kg)</th><th class="nw">钢筋归类</th>
                    </tr>
                    <tr>
                        <td class="idx">58</td><td class="cn">13跨.下部不<br>伸入支座…</td><td>25</td><td class="mid"><svg class="rb big"><use href="#i-rb"/></svg></td><td>1</td>
                        <td class="shape"><div class="sh-line"><span>6120</span></div></td>
                        <td>-0.1*7650+7650-0.1*7650</td><td class="cn">-距支座边<br>距离+…</td><td>6120</td><td>8</td><td>0</td><td>0</td><td>23.562</td><td>188.496</td><td class="cn">直筋</td>
                    </tr>
                    <tr>
                        <td class="idx">59</td><td class="cn">13跨.下部钢<br>筋1</td><td>25</td><td class="mid"><svg class="rb big"><use href="#i-rb"/></svg></td><td>1</td>
                        <td class="shape"><div class="sh-line"><span>8005</span></div></td>
                        <td>15*d+7650-20</td><td class="cn">锚固+净<br>长-保护层</td><td>8005</td><td>9</td><td>0</td><td>0</td><td>30.819</td><td>277.371</td><td class="cn">直筋</td>
                    </tr>
                    <tr>
                        <td class="idx">60</td><td class="cn">1跨.加腋主<br>筋1</td><td>22</td><td class="mid"><svg class="rb big"><use href="#i-rb"/></svg></td><td>1</td>
                        <td class="shape"><div class="sh-line"><span>2679</span></div></td>
                        <td>37*d+1051+37*d</td><td class="cn">锚固+净长<br>+锚固</td><td>2679</td><td>4</td><td>0</td><td>0</td><td>7.983</td><td>31.932</td><td class="cn">直筋</td>
                    </tr>
                    <tr>
                        <td class="idx on">61</td><td class="cn">1跨.加腋箍<br>筋1</td><td class="cur">8</td><td class="mid"><svg class="rb big"><use href="#i-rb"/></svg></td><td>195</td>
                        <td class="shape"><div class="sh-box"><b>710</b><svg class="stirrup" viewBox="0 0 62 40"><use href="#i-stirrup"/><text x="3" y="32">460</text></svg></div></td>
                        <td>2*((500-2*20)+(750-2*20))<br>+2*(12.89*d)</td><td></td><td>2546</td><td>9</td><td>0</td><td>0</td><td>1.006</td><td>9.054</td><td class="cn">箍筋</td>
                    </tr>
                    <tr>
                        <td class="idx">62</td><td class="cn">1跨.加腋箍<br>筋2</td><td>8</td><td class="mid"><svg class="rb big"><use href="#i-rb"/></svg></td><td>195</td>
                        <td class="shape"><div class="sh-box"><b>710</b><svg class="stirrup" viewBox="0 0 62 40"><use href="#i-stirrup"/><text x="3" y="32">181</text></svg></div></td>
                        <td>2*(((500-2*20-2*d-25)/<br>6*2+25+2*d)+(750-2*20))+…</td><td></td><td>1988</td><td>9</td><td>0</td><td>0</td><td>0.785</td><td>7.065</td><td class="cn">箍筋</td>
                    </tr>
                    <tr>
                        <td class="idx">63</td><td class="cn">1跨.箍筋1</td><td>8</td><td class="mid"><svg class="rb big"><use href="#i-rb"/></svg></td><td>195</td>
                        <td class="shape"><div class="sh-box"><b>710</b><svg class="stirrup" viewBox="0 0 62 40"><use href="#i-stirrup"/><text x="3" y="32">460</text></svg></div></td>
                        <td>2*((500-2*20)+(750-2*20))<br>+2*(12.89*d)</td><td></td><td>2546</td><td>29</td><td>0</td><td>0</td><td>1.006</td><td>29.174</td><td class="cn">箍筋</td>
                    </tr>
                    <tr>
                        <td class="idx">64</td><td class="cn">1跨.箍筋2</td><td>8</td><td class="mid"><svg class="rb big"><use href="#i-rb"/></svg></td><td>195</td>
                        <td class="shape"><div class="sh-box"><b>710</b><svg class="stirrup" viewBox="0 0 62 40"><use href="#i-stirrup"/><text x="3" y="32">181</text></svg></div></td>
                        <td>2*(((500-2*20-2*d-25)/<br>6*2+25+2*d)+(750-2*20))+…</td><td></td><td>1988</td><td>29</td><td>0</td><td>0</td><td>0.785</td><td>22.765</td><td class="cn">箍筋</td>
                    </tr>
                    <tr>
                        <td class="idx">65</td><td class="cn">2跨.箍筋1</td><td>10</td><td class="mid"><svg class="rb big"><use href="#i-rb"/></svg></td><td>195</td>
                        <td class="shape"><div class="sh-box"><b>710</b><svg class="stirrup" viewBox="0 0 62 40"><use href="#i-stirrup"/><text x="3" y="32">460</text></svg></div></td>
                        <td>2*((500-2*20)+(750-2*20))<br>+2*(12.89*d)</td><td></td><td>2598</td><td>51</td><td>0</td><td>0</td><td>1.603</td><td>81.753</td><td class="cn">箍筋</td>
                    </tr>
                </table>
                <div class="thumb bar-thumb"></div>
            </div>
        </div>
    </div>

    <!-- red marks drawn over the screenshot -->
    <svg class="marks" viewBox="0 0 1641 909">
        <rect x="147" y="564" width="184" height="50" rx="5"/>
        <rect x="1510" y="347" width="110" height="49" rx="3"/>
        <rect x="587" y="692" width="404" height="96" rx="6"/>
        <polygon class="arrow" points="587,596 836,712 830,702 864,727 823,727 829,720 586,598"/>
    </svg>
</body>
</html>
```

FILE: styles.css
```css
html, body {
    margin: 0;
    padding: 0;
}

body {
    position: relative;
    width: 1641px;
    height: 909px;
    overflow: hidden;
    background: #fff;
    color: #444;
    font-family: "Noto Sans CJK SC", "Noto Sans", sans-serif;
    font-size: 12px;
}

.sprite {
    display: none;
}

/* icons */
.ic {
    width: 16px;
    height: 16px;
    flex: none;
    fill: none;
    stroke: #5c5c5c;
    stroke-width: 1;
    overflow: visible;
}

.b { fill: none; stroke: #1e7be0; }
.bf { fill: #1e7be0; stroke: #1e7be0; }
.bl { fill: #d6e6f8; stroke: #1e7be0; }
.r { stroke: #e03030; }
.g { stroke: #b5b5b5; }

.ic-txt {
    font-family: "Liberation Sans", sans-serif;
    font-size: 4px;
    font-weight: bold;
    fill: #1e7be0;
    stroke: none;
}

.ic-blue {
    font-family: "Liberation Sans", sans-serif;
    font-size: 9px;
    font-weight: bold;
    fill: #1e7be0;
    stroke: none;
}

.caret {
    display: inline-block;
    width: 0;
    height: 0;
    margin-left: 6px;
    border-left: 3px solid transparent;
    border-right: 3px solid transparent;
    border-top: 4px solid #999;
    flex: none;
}

.caret.dark {
    margin: 0;
    border-top-color: #555;
}

/* top tabs, cut off by the screenshot */
.tab-strip {
    display: flex;
    height: 12px;
    padding-left: 45px;
    overflow: hidden;
    position: relative;
}

.logo-dot {
    position: absolute;
    left: 13px;
    top: -4px;
    width: 8px;
    height: 8px;
    border-radius: 50%;
    background: #1e7be0;
}

.tab {
    padding: 0 13px;
    line-height: 6px;
    font-size: 12px;
    white-space: nowrap;
    color: #555;
}

.tab.active {
    margin-right: 1px;
    padding: 0 12px;
    height: 11px;
    background: #2b8ef0;
    color: #fff;
    border-radius: 0 0 11px 11px;
}

.top-note {
    position: absolute;
    left: 1412px;
    top: 0;
    line-height: 3px;
    color: #111;
    white-space: nowrap;
}

/* ribbon */
.ribbon {
    display: flex;
    height: 97px;
    border-bottom: 1px solid #dcdcdc;
    overflow: hidden;
}

.rb-group {
    flex: none;
    display: flex;
    flex-direction: column;
    box-sizing: border-box;
    height: 92px;
    margin-top: 1px;
    border-right: 1px solid #d8d8d8;
}

.g-select { width: 229px; padding-left: 3px; }
.g-cad { width: 193px; padding-left: 7px; }
.g-common { width: 276px; padding-left: 8px; }
.g-edit { width: 237px; padding-left: 9px; }
.g-draw { width: 67px; padding-left: 7px; }
.g-beam { width: 250px; padding-left: 2px; }
.g-smart { width: 78px; }
.g-second { width: 480px; padding-left: 9px; border-right: 0; }

.rb-body {
    display: flex;
    height: 72px;
}

.rb-label {
    display: flex;
    justify-content: center;
    align-items: center;
    height: 20px;
    color: #555;
}

.rb-col {
    flex: none;
    display: flex;
    flex-direction: column;
}

.w33 { width: 33px; }
.w53 { width: 53px; }
.w54 { width: 54px; }
.w63 { width: 63px; }
.w67 { width: 67px; }
.w79 { width: 79px; }
.w86 { width: 86px; }
.w91 { width: 91px; }
.w99 { width: 99px; }
.w102 { width: 102px; }
.w111 { width: 111px; }

.rb-item {
    display: flex;
    align-items: center;
    gap: 3px;
    height: 23px;
    white-space: nowrap;
}

.rb-item.disabled {
    color: #b5b5b5;
}

.rb-big {
    flex: none;
    display: flex;
    flex-direction: column;
    align-items: center;
    box-sizing: border-box;
    width: 40px;
    height: 67px;
    margin: 2px 4px 0 0;
    padding-top: 2px;
    gap: 2px;
    border-radius: 3px;
}

.rb-big.selected {
    background: #c3daf3;
}

.rb-big.w52 { width: 52px; margin: 2px 0 0; }
.rb-big.w62 { width: 62px; margin: 2px 0 0 1px; }

.big-arrow {
    width: 21px;
    height: 28px;
    margin-bottom: 5px;
    stroke: #1e7be0;
    stroke-width: 2;
}

.big-filter, .big-smart {
    width: 32px;
    height: 31px;
    margin-bottom: 2px;
    fill: none;
    stroke-width: 2.500;
}

.big-filter { stroke: #1e7be0; }
.big-smart { stroke: #555; }
.smart-sel { stroke: #1e7be0; stroke-dasharray: 5 2; }
.rb-big .caret { margin: 2px 0 0; }

.check {
    display: inline-block;
    width: 15px;
    height: 15px;
    margin-right: 3px;
    border-radius: 2px;
    background: #1e7be0;
    color: #fff;
    text-align: center;
    line-height: 15px;
    font-weight: bold;
}

/* combo row */
.combo-row {
    display: flex;
    gap: 4px;
    box-sizing: border-box;
    height: 26px;
    padding-top: 2px;
    background: #f0f0f0;
}

.combo {
    box-sizing: border-box;
    display: flex;
    justify-content: space-between;
    align-items: center;
    width: 98px;
    height: 21px;
    padding: 0 5px 0 3px;
    background: #fff;
    border: 1px solid #e2e2e2;
    border-radius: 3px;
    color: #444;
}

.combo.first {
    width: 95px;
    padding-left: 1px;
    border-left: 0;
}

/* main area */
.main-content {
    display: flex;
    gap: 5px;
    height: 773px;
}

.close-bar {
    height: 11px;
    padding-right: 2px;
    background: #e6e6e6;
    color: #aaa;
    font-size: 12px;
    line-height: 11px;
    text-align: right;
}

.close-bar.thin {
    height: 10px;
    line-height: 10px;
}

.panel-head {
    height: 23px;
    padding-left: 4px;
    background: #f0f0f0;
    border-bottom: 1px solid #ddd;
    color: #888;
    line-height: 24px;
}

.thumb {
    position: absolute;
    width: 8px;
    border-radius: 4px;
    background: #c8c8c8;
}

/* navigation */
.nav-panel {
    position: relative;
    flex: none;
    width: 142px;
    border-right: 1px solid #e0e0e0;
    box-sizing: border-box;
    overflow: hidden;
}

.nav-tools {
    display: flex;
    align-items: center;
    gap: 4px;
    height: 26px;
    padding-left: 4px;
    border-bottom: 1px solid #ddd;
}

.sparkle {
    flex: 1;
    color: #1e7be0;
    font-size: 11px;
}

.nav-btn {
    display: flex;
    justify-content: center;
    align-items: center;
    width: 24px;
    height: 22px;
    border-radius: 3px;
    background: #c3daf3;
}

.nav-tree {
    padding-top: 2px;
}

.node, .leaf {
    display: flex;
    align-items: center;
    height: 24px;
    white-space: nowrap;
    overflow: hidden;
}

.node {
    padding-left: 7px;
}

.leaf {
    box-sizing: border-box;
    width: 128px;
    padding-left: 39px;
}

.leaf span {
    margin-left: 6px;
}

.leaf.selected {
    background: linear-gradient(#fff 0, #fff 2px, #c3daf3 2px, #c3daf3 22px, #fff 22px);
    margin-left: 36px;
    width: 92px;
    padding-left: 3px;
    border-radius: 3px 0 0 3px;
}

.tri-r {
    width: 0;
    height: 0;
    margin-right: 7px;
    margin-left: 1px;
    border-top: 3px solid transparent;
    border-bottom: 3px solid transparent;
    border-left: 4px solid #999;
}

.tri-d {
    width: 0;
    height: 0;
    margin-right: 6px;
    border-left: 3px solid transparent;
    border-right: 3px solid transparent;
    border-top: 4px solid #999;
}

.nav-thumb {
    left: 131px;
    top: 78px;
    height: 392px;
}

/* middle column */
.mid-col {
    flex: none;
    display: flex;
    flex-direction: column;
    gap: 5px;
    width: 433px;
}

.list-panel {
    position: relative;
    height: 310px;
    border-bottom: 1px solid #ddd;
    box-sizing: border-box;
    overflow: hidden;
}

.prop-panel {
    position: relative;
    flex: 1;
    overflow: hidden;
}

.tab-head {
    display: flex;
    height: 24px;
    background: #f0f0f0;
    border-bottom: 1px solid #ddd;
    border-left: 1px solid #ddd;
    box-sizing: border-box;
}

.prop-panel .tab-head {
    height: 22px;
}

.panel-tab {
    width: 65px;
    background: #dedede;
    color: #888;
    text-align: center;
    line-height: 23px;
}

.panel-tab.on {
    background: #f0f0f0;
    color: #333;
    font-weight: bold;
    border-right: 1px solid #d0d0d0;
    box-sizing: border-box;
}

.list-tools {
    display: flex;
    align-items: center;
    gap: 12px;
    height: 27px;
    padding-left: 5px;
    border-left: 1px solid #ddd;
    border-bottom: 1px solid #ddd;
    box-sizing: border-box;
    position: relative;
}

.tool {
    display: flex;
    align-items: center;
    gap: 4px;
    white-space: nowrap;
}

.tool .caret {
    margin: 0 -2px 0 2px;
}

.more {
    position: absolute;
    right: 2px;
    top: 3px;
    width: 10px;
    height: 20px;
    font-size: 7px;
    line-height: 20px;
    color: #555;
    border: 1px solid #eee;
}

.search-row {
    display: flex;
    justify-content: space-between;
    align-items: center;
    height: 19px;
    padding: 0 5px 0 3px;
    border-left: 1px solid #ddd;
    border-bottom: 1px solid #ddd;
    box-sizing: border-box;
    color: #aaa;
}

.ic.small {
    width: 11px;
    height: 11px;
}

.list-tree {
    border-left: 1px solid #ddd;
    padding-top: 3px;
}

.lv1, .lv2, .lv3 {
    display: flex;
    align-items: center;
    height: 24px;
}

.lv1 { padding-left: 14px; }
.lv2 { padding-left: 34px; }
.lv3 { padding-left: 60px; }
.lv1 .tri-d, .lv2 .tri-d { margin-right: 3px; }

.lv3 span {
    box-sizing: border-box;
    height: 21px;
    padding-left: 4px;
    line-height: 21px;
}

.lv3 .pick {
    width: 84px;
    border-radius: 3px;
    background: #c3daf3;
}

.list-thumb {
    left: 423px;
    top: 98px;
    height: 15px;
}

/* property table */
table {
    border-collapse: collapse;
    table-layout: fixed;
}

td, th {
    padding: 0;
    font-weight: normal;
    border: 1px solid #ddd;
    overflow: hidden;
    white-space: nowrap;
}

.prop-table {
    width: 417px;
}

.c23 { width: 23px; }
.c100 { width: 100px; }

.prop-table tr {
    height: 21px;
}

.prop-table th {
    text-align: center;
    color: #444;
}

.prop-table td {
    padding-left: 3px;
}

.prop-table .idx {
    padding: 0;
}

.prop-table th.hl, .bar-table th.hl {
    background: #7eb8f8;
    color: #fff;
}

.idx {
    background: #f0f0f0;
    text-align: center;
    font-size: 13px;
}

.lnk {
    color: #1e6fdc;
}

.rb {
    width: 8px;
    height: 10px;
    margin: 0 1px;
    vertical-align: 3px;
    fill: none;
    stroke: #333;
    stroke-width: 1;
}

.rb.big {
    width: 9px;
    height: 11px;
    vertical-align: -1px;
    stroke-width: 1.400;
}

.prop-thumb {
    left: 422px;
    top: 48px;
    height: 284px;
}

/* 3d view */
.right-col {
    flex: 1;
    min-width: 0;
    display: flex;
    flex-direction: column;
}

.view-wrap {
    position: relative;
    display: flex;
    height: 132px;
}

.view-3d {
    width: 1021px;
    height: 132px;
    flex: none;
}

.side-handle {
    position: absolute;
    left: -5px;
    top: 17px;
    width: 5px;
    height: 100px;
    background: #6b7680;
}

.beam-text {
    font-family: "Liberation Sans", sans-serif;
    font-size: 10px;
    fill: #e8a020;
}

.beam-text.pale {
    fill: #b9c38a;
    font-size: 9px;
}

.axis-num {
    font-family: "Liberation Sans", sans-serif;
    font-size: 13px;
    fill: #fff;
}

.axis-z, .axis-y, .axis-x {
    font-family: "Liberation Sans", sans-serif;
    font-size: 12px;
}

.axis-z { fill: #1a3cf0; }
.axis-y { fill: #1dc81d; }
.axis-x { fill: #f01818; }

.view-side {
    flex: 1;
    display: flex;
    flex-direction: column;
    align-items: center;
    gap: 9px;
    padding: 13px 0 0 1px;
    overflow: hidden;
}

.view-ic {
    flex: none;
    width: 20px;
    height: 20px;
    fill: none;
    stroke: #5c6470;
    overflow: visible;
}

.ic-2d {
    font-family: "Liberation Sans", sans-serif;
    font-size: 9px;
    font-weight: bold;
    fill: #1e7be0;
    stroke: none;
}

.cube-on {
    fill: #c9def6;
    stroke: #1e7be0;
}

.split-bar {
    display: flex;
    justify-content: center;
    height: 5px;
}

.split-tab {
    width: 100px;
    height: 4px;
    background: #5a6570;
    color: #ddd;
    font-size: 6px;
    line-height: 4px;
    text-align: center;
}

/* beam span table */
.span-panel {
    position: relative;
    height: 198px;
}

.span-panel .panel-head, .bar-panel .panel-head {
    height: 22px;
    padding-left: 9px;
}

.span-tools {
    display: flex;
    align-items: center;
    gap: 12px;
    height: 28px;
    padding-left: 5px;
    border-bottom: 1px solid #ddd;
    color: #333;
}

.span-tools .off {
    color: #bbb;
}

.span-wrap {
    height: 122px;
    overflow: hidden;
}

.span-table {
    width: 1028px;
}

.s15 { width: 15px; }
.s60 { width: 60px; }
.s61 { width: 61px; }
.s62 { width: 62px; }
.s80 { width: 80px; }
.s81 { width: 81px; }
.s82 { width: 82px; }
.s101 { width: 101px; }

.span-table th {
    height: 33px;
    color: #555;
}

.span-table td {
    height: 18px;
    padding: 0 0 2px 3px;
}

.span-table .idx {
    padding: 0;
    font-size: 12px;
}

.hscroll {
    position: relative;
    display: flex;
    align-items: center;
    justify-content: space-between;
    height: 14px;
    padding: 0 22px 0 5px;
    border-bottom: 1px solid #ddd;
}

.tri-l {
    border-top: 3px solid transparent;
    border-bottom: 3px solid transparent;
    border-right: 4px solid #555;
}

.tri-rr {
    border-top: 3px solid transparent;
    border-bottom: 3px solid transparent;
    border-left: 4px solid #555;
}

.hthumb {
    position: absolute;
    left: 677px;
    top: 4px;
    width: 348px;
    height: 7px;
    border-radius: 4px;
    background: #c8c8c8;
}

.span-thumb {
    left: 1041px;
    top: 76px;
    width: 7px;
    height: 28px;
}

/* rebar table */
.bar-panel {
    position: relative;
    margin-top: 5px;
    flex: 1;
    overflow: hidden;
}

.bar-panel .close-bar {
    height: 12px;
}

.bar-tools {
    display: flex;
    align-items: center;
    gap: 12px;
    height: 27px;
    padding-left: 6px;
    border-bottom: 1px solid #ddd;
    box-sizing: border-box;
    color: #444;
}

.nav-ic { margin-right: 4px; }
.last-ic { margin-right: 3px; }
.up-ic { margin-right: -1px; }
.down-ic { margin-right: 1px; }

.bar-tools .total {
    white-space: nowrap;
    margin-left: -2px;
    word-spacing: 2px;
}

.bar-table {
    width: 1038px;
    font-family: "Liberation Serif", "Noto Sans CJK SC", serif;
    color: #333;
}

.b20 { width: 20px; }
.b34 { width: 34px; }
.b35 { width: 35px; }
.b38 { width: 38px; }
.b39 { width: 39px; }
.b50 { width: 50px; }
.b56 { width: 56px; }
.b58 { width: 58px; }
.b60 { width: 60px; }
.b61 { width: 61px; }
.b71 { width: 71px; }
.b74 { width: 74px; }
.b166 { width: 166px; }
.b215 { width: 215px; }

.bar-table th {
    height: 21px;
    background: #fff;
    color: #555;
    font-family: "Noto Sans CJK SC", sans-serif;
}

.bar-table th.nw {
    padding-left: 13px;
    text-align: left;
}

.bar-table th.clip div {
    height: 21px;
    overflow: hidden;
}

.bar-table th.clip span {
    display: block;
    margin-top: -7px;
    line-height: 17px;
}

.bar-table td {
    height: 42px;
    padding: 0 0 3px 3px;
    background: #c0dde0;
    border-color: #d4d8d8;
    letter-spacing: .6px;
    line-height: 14px;
}

.bar-table td.idx {
    padding: 0;
    background: #f0f0f0;
    font-size: 13px;
    font-family: "Noto Sans CJK SC", sans-serif;
    letter-spacing: 0;
}

.bar-table td.idx.on {
    background: #7eb8f8;
    color: #fff;
    font-weight: bold;
}

.bar-table td.cn {
    font-family: "Noto Sans CJK SC", sans-serif;
    letter-spacing: 0;
}

.bar-table td.mid {
    padding-left: 5px;
}

.bar-table td.cur {
    outline: 2px solid #808080;
    outline-offset: -2px;
}

.bar-table td.shape {
    padding: 0;
    vertical-align: top;
}

.sh-line {
    margin: 13px 4px 0 18px;
    padding-bottom: 2px;
    border-bottom: 2px solid #111;
    text-align: center;
    line-height: 16px;
    color: #f00;
    letter-spacing: 1px;
}

.sh-line span {
    padding-left: 7px;
}

.sh-box {
    display: flex;
    align-items: center;
    height: 45px;
    padding-left: 55px;
}

.sh-box b {
    width: 50px;
    font-size: 20px;
    font-weight: normal;
    color: #333;
}

.stirrup {
    width: 62px;
    height: 40px;
    flex: none;
    fill: none;
}

.stirrup text {
    font-size: 20px;
    fill: #e02a2a;
    font-family: "Liberation Serif", serif;
}

.st-box {
    fill: none;
    stroke: #111;
    stroke-width: 2;
}

.bar-thumb {
    left: 1042px;
    top: 281px;
    width: 7px;
    height: 31px;
}

/* red marks */
.marks {
    position: absolute;
    left: 0;
    top: 0;
    width: 1641px;
    height: 909px;
    pointer-events: none;
    fill: none;
    stroke: #ff2414;
    stroke-width: 5;
}

.marks .arrow {
    fill: #ff2414;
    stroke: none;
}
```
